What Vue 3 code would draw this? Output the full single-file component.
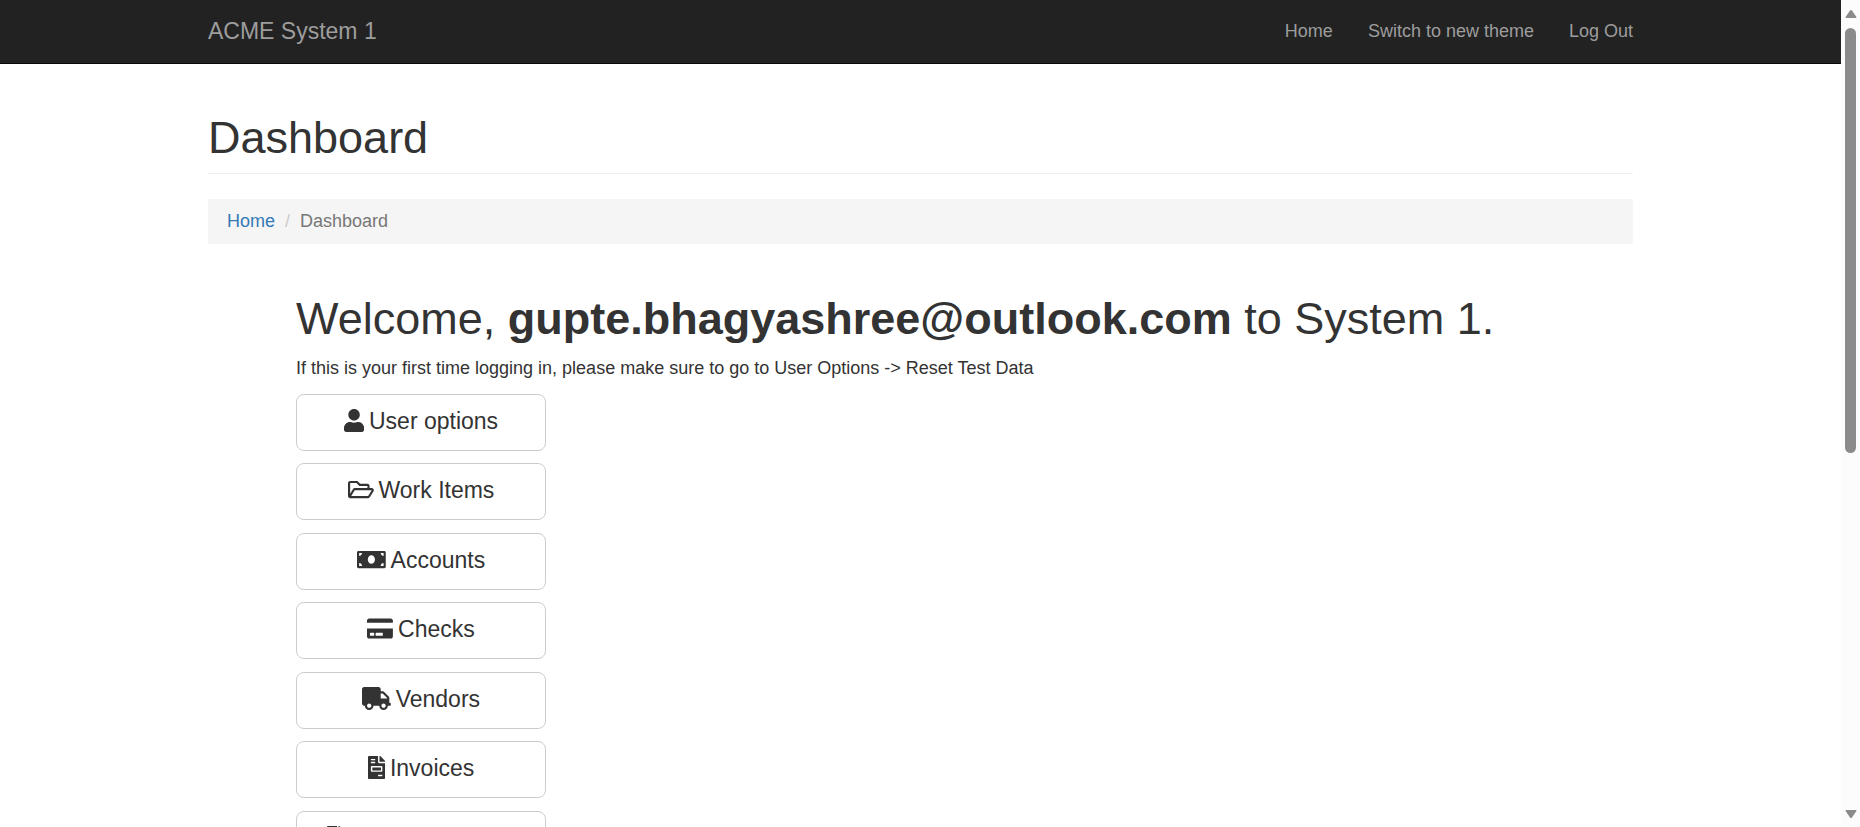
<script setup>
const navLinks = ['Home', 'Switch to new theme', 'Log Out']

const invoicePath =
  'M288 256H96v64h192v-64zm89-151L279.1 7c-4.5-4.5-10.6-7-17-7H256v128h128v-6.1c0-6.3-2.5-12.4-7-16.9zm-153 31V0H24C10.7 0 0 10.7 0 24v464c0 13.3 10.7 24 24 24h336c13.3 0 24-10.7 24-24V160H248c-13.2 0-24-10.8-24-24zM64 72c0-4.42 3.58-8 8-8h80c4.42 0 8 3.58 8 8v16c0 4.42-3.58 8-8 8H72c-4.42 0-8-3.58-8-8V72zm0 64c0-4.42 3.58-8 8-8h80c4.42 0 8 3.58 8 8v16c0 4.42-3.58 8-8 8H72c-4.42 0-8-3.58-8-8v-16zm256 304c0 4.42-3.58 8-8 8h-80c-4.42 0-8-3.58-8-8v-16c0-4.42 3.58-8 8-8h80c4.42 0 8 3.58 8 8v16zm0-200v96c0 8.84-7.16 16-16 16H80c-8.84 0-16-7.16-16-16v-96c0-8.84 7.16-16 16-16h224c8.84 0 16 7.16 16 16z'

const menu = [
  {
    label: 'User options',
    width: 448,
    path: 'M224 256c70.7 0 128-57.3 128-128S294.7 0 224 0 96 57.3 96 128s57.3 128 128 128zm89.6 32h-16.7c-22.2 10.2-46.9 16-72.9 16s-50.6-5.8-72.9-16h-16.7C60.2 288 0 348.2 0 422.4V464c0 26.5 21.5 48 48 48h352c26.5 0 48-21.5 48-48v-41.6c0-74.2-60.2-134.4-134.4-134.4z'
  },
  {
    label: 'Work Items',
    width: 576,
    path: 'M527.9 224H480v-48c0-26.5-21.5-48-48-48H272l-64-64H48C21.5 64 0 85.5 0 112v288c0 26.5 21.5 48 48 48h400c16.5 0 31.9-8.5 40.7-22.6l79.9-128c20-31.9-3-73.4-40.7-73.4zM48 118c0-3.3 2.7-6 6-6h134.1l64 64H426c3.3 0 6 2.7 6 6v42H152c-16.8 0-32.4 8.8-41.1 23.2L48 351.4zm400 282H72l77.2-128H528z'
  },
  {
    label: 'Accounts',
    width: 640,
    path: 'M608 64H32C14.33 64 0 78.33 0 96v320c0 17.67 14.33 32 32 32h576c17.67 0 32-14.33 32-32V96c0-17.67-14.33-32-32-32zM48 400v-64c35.35 0 64 28.65 64 64H48zm0-224v-64h64c0 35.35-28.65 64-64 64zm272 176c-44.19 0-80-42.99-80-96 0-53.02 35.82-96 80-96s80 42.98 80 96c0 53.03-35.83 96-80 96zm272 48h-64c0-35.35 28.65-64 64-64v64zm0-224c-35.35 0-64-28.65-64-64h64v64z'
  },
  {
    label: 'Checks',
    width: 576,
    path: 'M0 432c0 26.5 21.5 48 48 48h480c26.5 0 48-21.5 48-48V256H0v176zm192-68c0-6.6 5.4-12 12-12h136c6.6 0 12 5.4 12 12v40c0 6.6-5.4 12-12 12H204c-6.6 0-12-5.4-12-12v-40zm-128 0c0-6.6 5.4-12 12-12h72c6.6 0 12 5.4 12 12v40c0 6.6-5.4 12-12 12H76c-6.6 0-12-5.4-12-12v-40zM576 80v48H0V80c0-26.5 21.5-48 48-48h480c26.5 0 48 21.5 48 48z'
  },
  {
    label: 'Vendors',
    width: 640,
    path: 'M624 352h-16V243.9c0-12.7-5.1-24.9-14.1-33.9L494 110.1c-9-9-21.2-14.1-33.9-14.1H416V48c0-26.5-21.5-48-48-48H48C21.5 0 0 21.5 0 48v320c0 26.5 21.5 48 48 48h16c0 53 43 96 96 96s96-43 96-96h128c0 53 43 96 96 96s96-43 96-96h48c8.8 0 16-7.2 16-16v-32c0-8.8-7.2-16-16-16zM160 464c-26.5 0-48-21.5-48-48s21.5-48 48-48 48 21.5 48 48-21.5 48-48 48zm320 0c-26.5 0-48-21.5-48-48s21.5-48 48-48 48 21.5 48 48-21.5 48-48 48zm80-208H416V144h44.1l99.9 99.9V256z'
  },
  { label: 'Invoices', width: 384, path: invoicePath },
  { label: '', width: 384, path: invoicePath }
]
</script>

<template>
  <div class="viewport">
    <div class="page">
      <header class="navbar">
        <div class="container navbar-inner">
          <a class="brand" href="#">ACME System 1</a>
          <nav class="nav">
            <a v-for="link in navLinks" :key="link" href="#">{{ link }}</a>
          </nav>
        </div>
      </header>

      <main class="container">
        <h1 class="page-header">Dashboard</h1>
        <ol class="breadcrumb">
          <li><a href="#">Home</a></li>
          <li class="active">Dashboard</li>
        </ol>

        <section class="content">
          <h1 class="welcome">Welcome, <b>gupte.bhagyashree@outlook.com</b> to System 1.</h1>
          <p class="hint">
            If this is your first time logging in, please make sure to go to User Options -&gt; Reset Test Data
          </p>
          <ul class="menu">
            <li v-for="item in menu" :key="item.label">
              <button type="button" class="btn" :class="{ 'icon-only': !item.label }">
                <svg class="icon" :viewBox="`0 0 ${item.width} 512`" aria-hidden="true">
                  <path :d="item.path" fill="currentColor" />
                </svg>
                <span v-if="item.label">{{ item.label }}</span>
              </button>
            </li>
          </ul>
        </section>
      </main>
    </div>

    <div class="scrollbar" aria-hidden="true">
      <svg class="arrow" viewBox="0 0 12 10"><path d="M6 1Q6.6 1 7 1.6L11.4 8Q11.8 9 10.8 9H1.2Q.2 9 .6 8L5 1.6Q5.4 1 6 1Z" fill="#8b8b8b" /></svg>
      <div class="track"><div class="thumb"></div></div>
      <svg class="arrow" viewBox="0 0 12 10"><path d="M6 9Q6.6 9 7 8.4L11.4 2Q11.8 1 10.8 1H1.2Q.2 1 .6 2L5 8.4Q5.4 9 6 9Z" fill="#8b8b8b" /></svg>
    </div>
  </div>
</template>

<style>
body {
  margin: 0;
  background: #fff;
}
</style>

<style scoped>
.viewport {
  display: flex;
  height: 100vh;
  overflow: hidden;
  font-family: "Liberation Sans", Arial, sans-serif;
  font-size: 18px;
  line-height: 25px;
  color: #333;
}

.page {
  flex: 1;
  min-width: 0;
}

.container {
  box-sizing: border-box;
  max-width: 1463px;
  margin: 0 auto;
  padding: 0 19px;
}

.navbar {
  background: #222;
  border-bottom: 1px solid #080808;
}

.navbar-inner {
  display: flex;
  justify-content: space-between;
  align-items: center;
  height: 63px;
}

.navbar a {
  color: #9d9d9d;
  text-decoration: none;
}

.brand {
  font-size: 23px;
}

.nav {
  display: flex;
  gap: 35px;
}

h1 {
  margin: 0;
  font-size: 45px;
  font-weight: 500;
  line-height: 50px;
}

.page-header {
  padding: 49px 0 10px;
  border-bottom: 1px solid #eee;
  font-weight: 400;
}

.breadcrumb {
  display: flex;
  margin: 25px 0 50px;
  padding: 10px 19px;
  list-style: none;
  background: #f5f5f5;
  border-radius: 2px;
}

.breadcrumb a {
  color: #337ab7;
  text-decoration: none;
}

.breadcrumb .active {
  color: #777;
}

.breadcrumb .active::before {
  content: "/";
  padding: 0 10px;
  color: #ccc;
}

.content {
  padding: 0 88px;
}

.welcome {
  font-weight: 400;
}

.hint {
  margin: 12px 0 13px;
}

.menu {
  margin: 0;
  padding: 0;
  list-style: none;
}

.menu li {
  width: 250px;
  margin-bottom: 12px;
}

.menu li:nth-child(even) {
  margin-bottom: 13px;
}

.btn {
  display: flex;
  justify-content: center;
  gap: 5px;
  width: 100%;
  padding: 12px 20px 15px;
  border: 1px solid #ccc;
  border-radius: 8px;
  background: #fff;
  color: #333;
  font-family: inherit;
  font-size: 23px;
  line-height: 28px;
}

.icon-only {
  justify-content: flex-start;
  padding-left: 30px;
}

.icon {
  height: 23px;
  margin-top: 2px;
}

.scrollbar {
  display: flex;
  flex-direction: column;
  align-items: center;
  box-sizing: border-box;
  width: 19px;
  padding: 9px 0 8px;
  background: #fcfcfc;
}

.arrow {
  width: 12px;
  height: 10px;
}

.track {
  flex: 1;
  width: 11px;
  padding: 9px 0;
}

.thumb {
  height: 55%;
  border-radius: 6px;
  background: #8b8b8b;
}
</style>
